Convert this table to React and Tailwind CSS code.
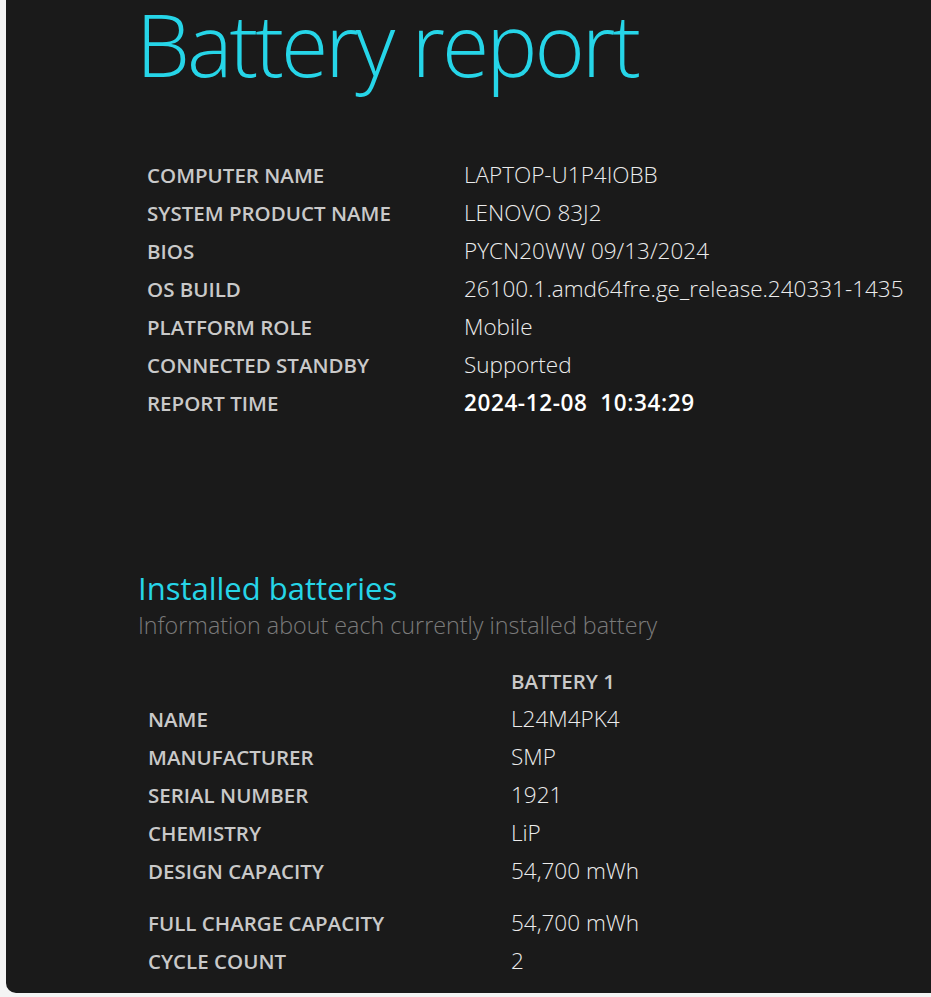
import React from "react";

const font = { fontFamily: '"Open Sans", "Noto Sans", sans-serif' };

const info = [
  ["COMPUTER NAME", "LAPTOP-U1P4IOBB"],
  ["SYSTEM PRODUCT NAME", "LENOVO 83J2"],
  ["BIOS", "PYCN20WW 09/13/2024"],
  ["OS BUILD", "26100.1.amd64fre.ge_release.240331-1435"],
  ["PLATFORM ROLE", "Mobile"],
  ["CONNECTED STANDBY", "Supported"],
];

const battery = [
  ["NAME", "L24M4PK4"],
  ["MANUFACTURER", "SMP"],
  ["SERIAL NUMBER", "1921"],
  ["CHEMISTRY", "LiP"],
  ["DESIGN CAPACITY", "54,700 mWh"],
];

function Row({ label, value, labelW, bold }) {
  return (
    <div className="flex h-[38px] items-center">
      <div className={`${labelW} shrink-0 whitespace-nowrap text-[20.5px] font-semibold text-[#c9c9c9]`}>{label}</div>
      <div
        className={`whitespace-pre text-[22.5px] ${
          bold ? "font-semibold tracking-[0.6px] text-white" : "font-light text-[#ececec]"
        }`}
      >
        {value}
      </div>
    </div>
  );
}

export default function App() {
  return (
    <div className="h-[997px] w-[931px] overflow-hidden bg-[#f4f4f4] pb-[4px] pl-[6px]" style={font}>
      <div className="h-[993px] w-full overflow-hidden rounded-bl-[10px] bg-[#1a1a1a] pl-[130px]">
        <div className="h-[100px] whitespace-nowrap text-[86px] font-light leading-[88px] tracking-[-3px] text-[#26d5e8]">
          Battery report
        </div>

        <div className="mt-[56px] pl-[11px]">
          {info.map(([l, v]) => (
            <Row key={l} label={l} value={v} labelW="w-[317px]" />
          ))}
          <Row label="REPORT TIME" value="2024-12-08  10:34:29" labelW="w-[317px]" bold />
        </div>

        <div className="mt-[148px] h-[36px] whitespace-nowrap pl-[2px] text-[31px] leading-[36px] text-[#26d5e8]">
          Installed batteries
        </div>
        <div className="mt-[3px] h-[32px] whitespace-nowrap pl-[2px] text-[23.3px] font-light leading-[32px] text-[#7b7b7b]">
          Information about each currently installed battery
        </div>

        <div className="mt-[21px] pl-[12px]">
          <div className="flex h-[38px] items-center">
            <div className="w-[363px] shrink-0" />
            <div className="text-[20.5px] font-semibold text-[#c9c9c9]">BATTERY 1</div>
          </div>
          {battery.map(([l, v]) => (
            <Row key={l} label={l} value={v} labelW="w-[363px]" />
          ))}
          <div className="h-[14px]" />
          <Row label="FULL CHARGE CAPACITY" value="54,700 mWh" labelW="w-[363px]" />
          <Row label="CYCLE COUNT" value="2" labelW="w-[363px]" />
        </div>
      </div>
    </div>
  );
}
